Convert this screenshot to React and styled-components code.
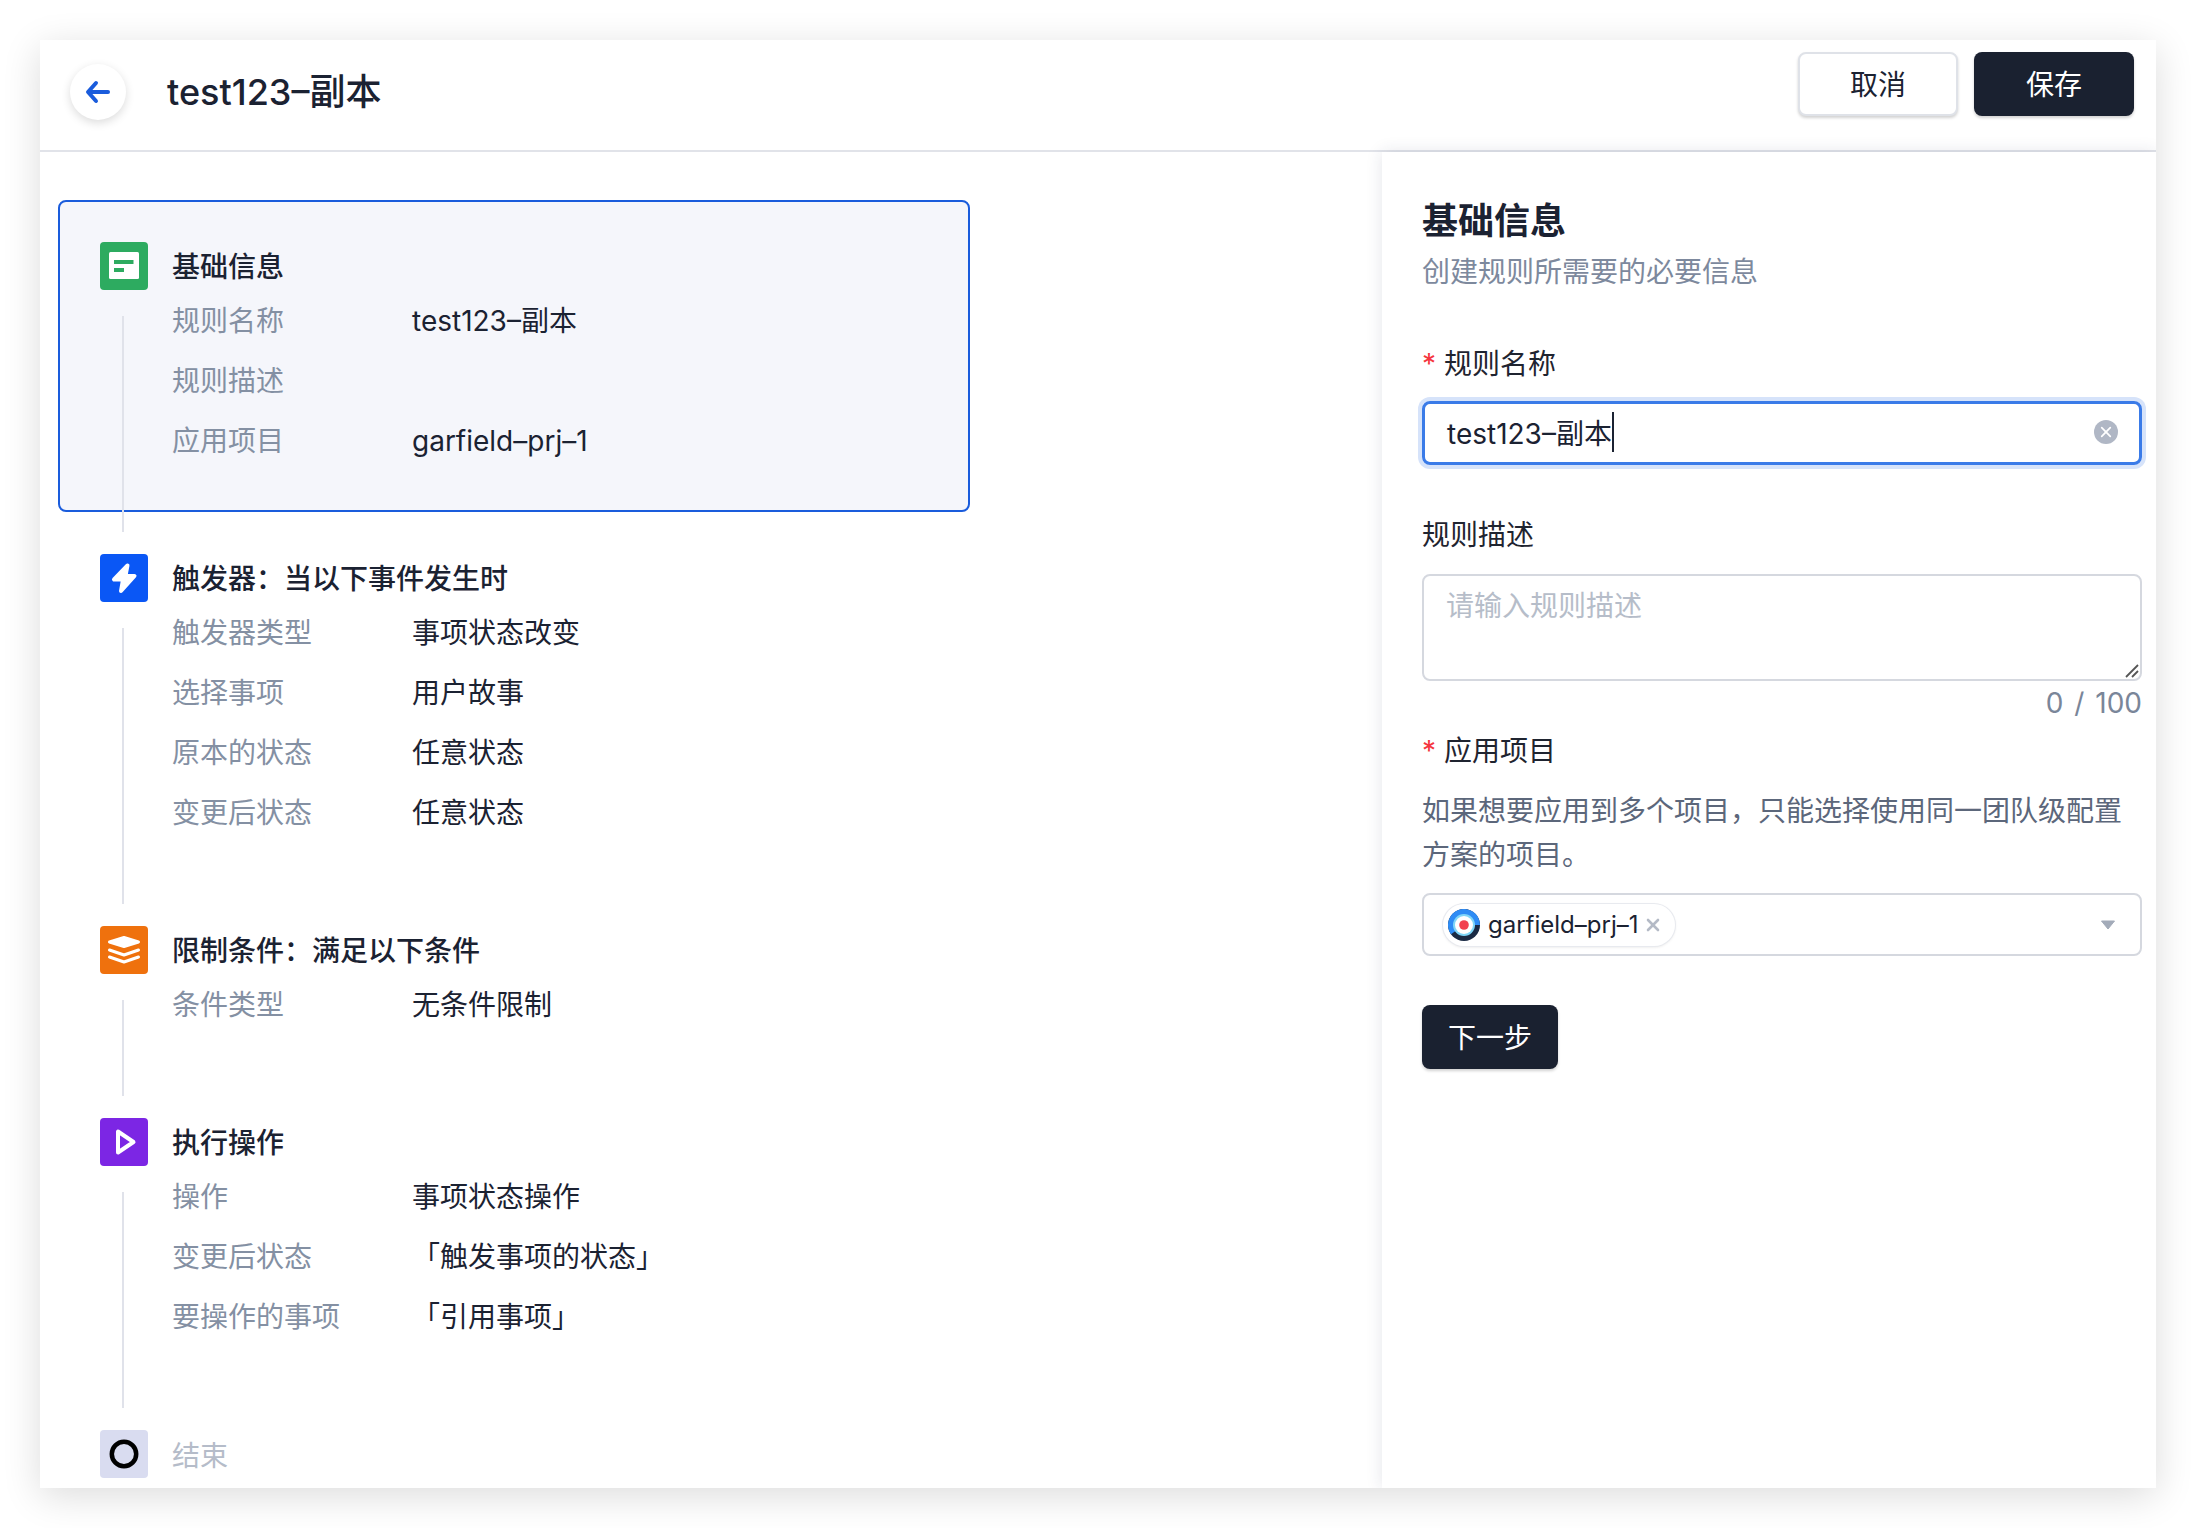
import React from 'react'
import styled, { createGlobalStyle } from 'styled-components'

const GlobalStyle = createGlobalStyle`
    html, body {
        margin:0;
        padding:0;
        background:white;
    }
    * {
        box-sizing:border-box;
    }
    body {
        font-family:Inter, "Noto Sans CJK SC", sans-serif;
        font-size:28px;
        font-variant-ligatures:common-ligatures;
        color:#1b2232;
    }
`

const Page = styled.div`
    width:2196px;
    height:1528px;
    padding:40px;
    overflow:hidden;
`

const Window = styled.div`
    width:2116px;
    height:1448px;
    background:white;
    box-shadow:0 8px 36px rgba(0,0,0,.14);
    display:flex;
    flex-direction:column;
    overflow:hidden;
`

const Header = styled.header`
    flex:none;
    height:112px;
    display:flex;
    justify-content:space-between;
    align-items:flex-start;
    padding:12px 22px 0 30px;
    border-bottom:2px solid #e1e3e9;
`

const HeaderLeft = styled.div`
    display:flex;
    align-items:center;
    gap:41px;
    margin-top:12px;
`

const BackButton = styled.div`
    width:56px;
    height:56px;
    border-radius:50%;
    background:white;
    box-shadow:0 3px 10px rgba(0,0,0,.14);
    display:flex;
    align-items:center;
    justify-content:center;
`

const PageTitle = styled.h1`
    margin:0;
    font-size:36px;
    line-height:56px;
    font-weight:500;
`

const HeaderActions = styled.div`
    display:flex;
    gap:16px;
`

const Button = styled.div`
    width:${props => props.width}px;
    height:64px;
    border-radius:8px;
    display:flex;
    align-items:center;
    justify-content:center;
    font-size:28px;
    padding-bottom:2px;
    color:${props => props.primary ? 'white' : '#1b2232'};
    background:${props => props.primary ? '#1a2130' : 'white'};
    border:${props => props.primary ? 'none' : '2px solid #dfe2e8'};
    box-shadow:0 2px 3px rgba(0,0,0,.18);
`

const Body = styled.div`
    flex:1;
    min-height:0;
    display:flex;
`

const FlowPane = styled.div`
    flex:1;
    padding:48px 0 0 18px;
    overflow:hidden;
`

const Step = styled.section`
    position:relative;
    width:912px;
    padding:40px 40px 40px;
    border:2px solid ${props => props.active ? '#1a5cdc' : 'transparent'};
    border-radius:8px;
    background:${props => props.active ? '#f5f6fb' : 'transparent'};

    ${props => props.connected && `
        &::after {
            content:'';
            position:absolute;
            left:62px;
            top:114px;
            bottom:-22px;
            width:2px;
            background:#e0e2ea;
        }
    `}
`

const StepHead = styled.div`
    display:flex;
    align-items:center;
    gap:24px;
    height:48px;
`

const StepIcon = styled.div`
    flex:none;
    width:48px;
    height:48px;
    border-radius:4px;
    background:${props => props.color};
`

const StepTitle = styled.div`
    font-size:28px;
    font-weight:${props => props.muted ? 400 : 500};
    color:${props => props.muted ? '#b5bcc9' : '#1b2232'};
    margin-top:${props => props.muted ? 0 : -2}px;
`

const Rows = styled.div`
    padding-left:72px;
`

const Row = styled.div`
    display:flex;
    height:60px;
    line-height:62px;
`

const RowLabel = styled.div`
    width:240px;
    color:#8490a3;
`

const RowValue = styled.div`
    color:#1b2232;
`

const FormPane = styled.aside`
    flex:none;
    width:774px;
    padding:45px 14px 0 40px;
    background:white;
    box-shadow:0 0 16px rgba(30,40,80,.12);
`

const FormTitle = styled.h2`
    margin:0;
    font-size:36px;
    line-height:48px;
    font-weight:600;
`

const FormHint = styled.div`
    margin-top:5px;
    line-height:44px;
    color:#7d899d;
`

const FieldLabel = styled.div`
    margin-top:${props => props.top}px;
    line-height:44px;
    color:#1f2430;
`

const Required = styled.span`
    color:#f5353f;
    margin-right:8px;
`

const TextField = styled.div`
    margin-top:15px;
    height:64px;
    display:flex;
    align-items:center;
    padding:0 14px 2px 22px;
    border:3px solid #3a7be8;
    border-radius:8px;
    box-shadow:0 0 0 4px #d6e3fa;
`

const Caret = styled.span`
    width:2px;
    height:40px;
    background:#1b2232;
`

const ClearIcon = styled.div`
    margin-left:auto;
    margin-right:7px;
    width:24px;
    height:24px;
    border-radius:50%;
    background:#b0b7c5;
    display:flex;
    align-items:center;
    justify-content:center;
`

const DescBox = styled.div`
    position:relative;
    margin-top:17px;
`

const DescField = styled.textarea`
    display:block;
    width:100%;
    height:107px;
    margin:0;
    padding:8px 22px;
    border:2px solid #d5d8df;
    border-radius:8px;
    outline:none;
    resize:none;
    font-family:inherit;
    font-size:28px;
    line-height:44px;
    color:#1b2232;

    &::placeholder {
        color:#b6bdc9;
    }
`

const ResizeGrip = styled.svg`
    position:absolute;
    right:3px;
    bottom:3px;
`

const Counter = styled.div`
    text-align:right;
    line-height:44px;
    word-spacing:3px;
    color:#7a8699;
`

const HelpText = styled.div`
    margin-top:16px;
    line-height:44px;
    color:#5c677b;
`

const SelectField = styled.div`
    margin-top:16px;
    height:63px;
    display:flex;
    align-items:center;
    justify-content:space-between;
    padding:0 24px 0 19px;
    border:2px solid #d5d8df;
    border-radius:8px;
`

const Tag = styled.div`
    height:42px;
    display:flex;
    align-items:center;
    padding:0 15px 0 5px;
    gap:8px;
    border-radius:21px;
    background:white;
    box-shadow:0 0 0 1px #e8eaef, 0 1px 3px rgba(0,0,0,.12);
    font-size:24px;
`

const NextButton = styled(Button)`
    margin-top:49px;
`

const BackIcon = () => <svg width="28" height="24" viewBox="0 0 28 24" fill="none" stroke="#1a5cdc" strokeWidth="4" strokeLinecap="round" strokeLinejoin="round">
    <path d="M24 12H5" />
    <path d="M12 3L4 12L12 21" />
</svg>

const InfoGlyph = () => <svg width="48" height="48" viewBox="0 0 48 48">
    <rect x="9" y="10" width="30" height="27" rx="1.5" fill="white" />
    <rect x="14" y="18" width="19.5" height="4" fill="#2dab60" />
    <rect x="14" y="26" width="10" height="4" fill="#2dab60" />
</svg>

const BoltGlyph = () => <svg width="48" height="48" viewBox="0 0 48 48" fill="white" stroke="white" strokeWidth="4" strokeLinejoin="round">
    <path d="M27.5 11.5L14 25.5H23L21 37L34.5 22H25.5Z" />
</svg>

const StackGlyph = () => <svg width="48" height="48" viewBox="0 0 48 48" fill="none" stroke="white" strokeWidth="3" strokeLinecap="round" strokeLinejoin="round">
    <path d="M24 11.5L38.5 16L24 20.5L9.5 16Z" fill="white" />
    <path d="M9.5 24L24 29L38.5 24" />
    <path d="M9.5 31L24 36L38.5 31" />
</svg>

const PlayGlyph = () => <svg width="48" height="48" viewBox="0 0 48 48" fill="none" stroke="white" strokeWidth="4" strokeLinejoin="round">
    <path d="M18 13.5V34.5L33.5 24Z" />
</svg>

const EndGlyph = () => <svg width="48" height="48" viewBox="0 0 48 48" fill="none" stroke="black" strokeWidth="4.5">
    <circle cx="24" cy="24" r="12.2" />
</svg>

const TargetAvatar = () => <svg width="32" height="32" viewBox="0 0 32 32" fill="none">
    <circle cx="16" cy="16" r="16" fill="#1a2a44" />
    <path d="M32 16A16 16 0 1 0 3 25.3L16 16Z" fill="#2e8cf5" />
    <circle cx="16" cy="16" r="11" fill="#7fd6f8" />
    <circle cx="16" cy="16" r="9" fill="white" />
    <circle cx="16" cy="16" r="4.8" fill="#f2404f" />
</svg>

const SmallCross = ({ size, color, weight }) => <svg width={size} height={size} viewBox="0 0 14 14" fill="none" stroke={color} strokeWidth={weight} strokeLinecap="round">
    <path d="M2 2L12 12" />
    <path d="M12 2L2 12" />
</svg>

const Chevron = () => <svg width="16" height="10" viewBox="0 0 16 10">
    <path d="M1.5 1H14.5L8 9Z" fill="#a3abb9" stroke="#a3abb9" strokeWidth="1" strokeLinejoin="round" />
</svg>

const steps = [
    {
        title: '基础信息', color: '#2dab60', glyph: <InfoGlyph />, active: true,
        rows: [['规则名称', 'test123–副本'], ['规则描述', ''], ['应用项目', 'garfield–prj–1']],
    },
    {
        title: '触发器：当以下事件发生时', color: '#0a57f5', glyph: <BoltGlyph />,
        rows: [['触发器类型', '事项状态改变'], ['选择事项', '用户故事'], ['原本的状态', '任意状态'], ['变更后状态', '任意状态']],
    },
    {
        title: '限制条件：满足以下条件', color: '#ef710d', glyph: <StackGlyph />,
        rows: [['条件类型', '无条件限制']],
    },
    {
        title: '执行操作', color: '#7c26e4', glyph: <PlayGlyph />,
        rows: [['操作', '事项状态操作'], ['变更后状态', '「触发事项的状态」'], ['要操作的事项', '「引用事项」']],
    },
    { title: '结束', color: '#d9dcf0', glyph: <EndGlyph />, muted: true, rows: [] },
]

const App = () => <Page>
    <GlobalStyle />
    <Window>
        <Header>
            <HeaderLeft>
                <BackButton><BackIcon /></BackButton>
                <PageTitle>test123–副本</PageTitle>
            </HeaderLeft>
            <HeaderActions>
                <Button width={160}>取消</Button>
                <Button width={160} primary>保存</Button>
            </HeaderActions>
        </Header>
        <Body>
            <FlowPane>
                {steps.map((step, index) => <Step key={step.title} active={step.active} connected={index < steps.length - 1}>
                    <StepHead>
                        <StepIcon color={step.color}>{step.glyph}</StepIcon>
                        <StepTitle muted={step.muted}>{step.title}</StepTitle>
                    </StepHead>
                    <Rows>
                        {step.rows.map(([label, value]) => <Row key={label}>
                            <RowLabel>{label}</RowLabel>
                            <RowValue>{value}</RowValue>
                        </Row>)}
                    </Rows>
                </Step>)}
            </FlowPane>
            <FormPane>
                <FormTitle>基础信息</FormTitle>
                <FormHint>创建规则所需要的必要信息</FormHint>
                <FieldLabel top={48}><Required>*</Required>规则名称</FieldLabel>
                <TextField>
                    test123–副本<Caret />
                    <ClearIcon><SmallCross size={12} color="white" weight={2} /></ClearIcon>
                </TextField>
                <FieldLabel top={48}>规则描述</FieldLabel>
                <DescBox>
                    <DescField placeholder="请输入规则描述" />
                    <ResizeGrip width="14" height="14" viewBox="0 0 14 14" fill="none" stroke="#555" strokeWidth="1.8">
                        <path d="M1 13L13 1" />
                        <path d="M7 13L13 7" />
                    </ResizeGrip>
                </DescBox>
                <Counter>0 / 100</Counter>
                <FieldLabel top={4}><Required>*</Required>应用项目</FieldLabel>
                <HelpText>如果想要应用到多个项目，只能选择使用同一团队级配置方案的项目。</HelpText>
                <SelectField>
                    <Tag>
                        <TargetAvatar />
                        garfield–prj–1
                        <SmallCross size={14} color="#b4bac6" weight={2.6} />
                    </Tag>
                    <Chevron />
                </SelectField>
                <NextButton width={136} primary>下一步</NextButton>
            </FormPane>
        </Body>
    </Window>
</Page>

export default App
